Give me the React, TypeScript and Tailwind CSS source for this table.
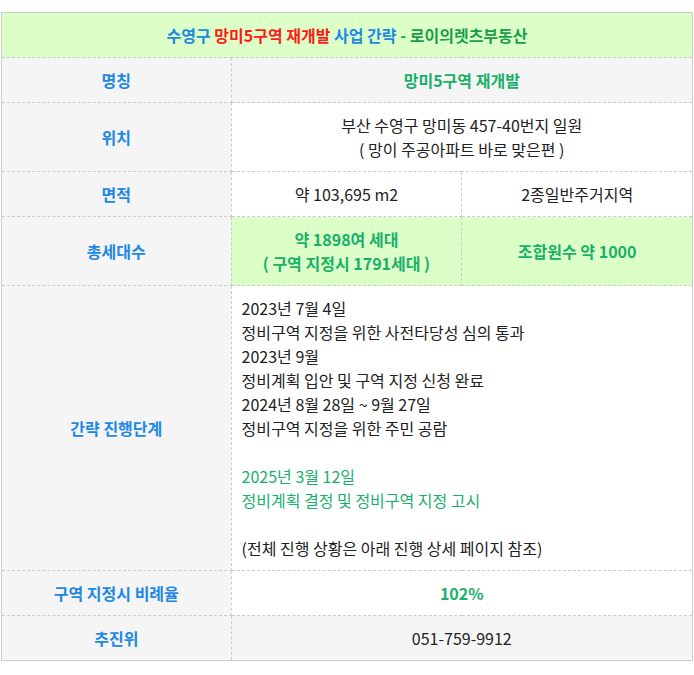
const font = { fontFamily: '"Noto Sans CJK KR", "Noto Sans", sans-serif' };

const TH = "border border-dashed border-[#cccccc] bg-[#f5f5f5] text-[#1e88e5] font-semibold text-center py-[10px]";
const TD = "border border-dashed border-[#cccccc] text-center py-[10px] px-[10px]";

export default function App() {
  return (
    <div className="bg-white w-[694px] h-[675px] pt-[12px] pl-px" style={font}>
      <table className="w-[692px] border-collapse border border-solid border-[#cccccc] text-[16px] leading-6 text-[#222]">
        <colgroup>
          <col className="w-[230px]" />
          <col className="w-[231px]" />
          <col className="w-[231px]" />
        </colgroup>
        <tbody>
          <tr className="bg-[#dbffc6]">
            <td colSpan={3} className="border border-dashed border-[#cccccc] text-center py-[10px] font-semibold">
              <span className="text-[#1e88e5]">수영구 </span>
              <span className="text-[#ff1a1a]">망미5구역 재개발</span>
              <span className="text-[#1e88e5]"> 사업 간략</span>
              <span className="text-[#1a9e4a]"> - 로이의렛츠부동산</span>
            </td>
          </tr>
          <tr className="bg-[#f5f5f5]">
            <td className={TH}>명칭</td>
            <td colSpan={2} className={TD + " text-[#19b06b] font-semibold"}>망미5구역 재개발</td>
          </tr>
          <tr>
            <td className={TH}>위치</td>
            <td colSpan={2} className={TD}>
              부산 수영구 망미동 457-40번지 일원
              <br />( 망이 주공아파트 바로 맞은편 )
            </td>
          </tr>
          <tr>
            <td className={TH}>면적</td>
            <td className={TD}>약 103,695 m2</td>
            <td className={TD}>2종일반주거지역</td>
          </tr>
          <tr className="bg-[#dbffc6]">
            <td className={TH}>총세대수</td>
            <td className={TD + " text-[#19b06b] font-semibold bg-[#dbffc6]"}>
              약 1898여 세대
              <br />( 구역 지정시 1791세대 )
            </td>
            <td className={TD + " text-[#19b06b] font-semibold bg-[#dbffc6]"}>조합원수 약 1000</td>
          </tr>
          <tr>
            <td className={TH}>간략 진행단계</td>
            <td colSpan={2} className={TD + " text-left"}>
              <div>2023년 7월 4일</div>
              <div>정비구역 지정을 위한 사전타당성 심의 통과</div>
              <div>2023년 9월</div>
              <div>정비계획 입안 및 구역 지정 신청 완료</div>
              <div>2024년 8월 28일 ~ 9월 27일</div>
              <div>정비구역 지정을 위한 주민 공람</div>
              <div>&nbsp;</div>
              <div className="text-[#19b06b]">2025년 3월 12일</div>
              <div className="text-[#19b06b]">정비계획 결정 및 정비구역 지정 고시</div>
              <div>&nbsp;</div>
              <div>(전체 진행 상황은 아래 진행 상세 페이지 참조)</div>
            </td>
          </tr>
          <tr>
            <td className={TH}>구역 지정시 비례율</td>
            <td colSpan={2} className={TD + " text-[#19b06b] font-semibold"}>102%</td>
          </tr>
          <tr className="bg-[#f5f5f5]">
            <td className={TH}>추진위</td>
            <td colSpan={2} className={TD}>051-759-9912</td>
          </tr>
        </tbody>
      </table>
    </div>
  );
}
